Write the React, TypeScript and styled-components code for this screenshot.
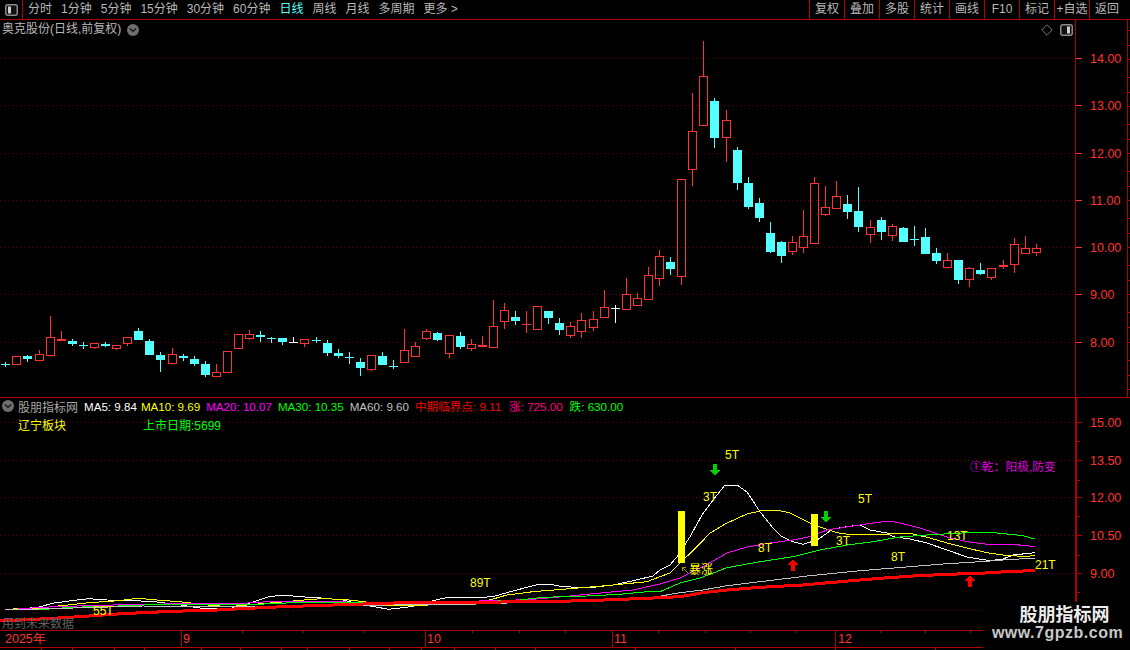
import React from "react";
import styled, { createGlobalStyle } from "styled-components";

const LINE = "#b00000";
const GRID = "#640000";
const AXIS = "#ff3232";
const CYAN = "#54ffff";
const CJK = `"Liberation Sans", "Noto Sans CJK SC", sans-serif`;

const Global = createGlobalStyle`
  html, body { margin: 0; padding: 0; background: #000; }
  body { font-family: ${CJK}; }
`;

const Screen = styled.div`
  position: relative;
  width: 1130px;
  height: 650px;
  overflow: hidden;
  background: #000;
  display: flex;
  flex-direction: column;
  font-size: 12px;
  color: #b8b8b8;
`;

const Toolbar = styled.div`
  height: 19px;
  flex: none;
  display: flex;
  align-items: stretch;
  border-bottom: 1px solid ${LINE};
`;

const IconBox = styled.div`
  width: 22px;
  border-right: 1px solid ${LINE};
  display: flex;
  align-items: center;
  justify-content: center;
`;

const Tabs = styled.div`
  display: flex;
  align-items: center;
  gap: 9px;
  margin-left: 5px;
`;

const Tab = styled.span<{ $active?: boolean }>`
  color: ${(p) => (p.$active ? CYAN : "#b8b8b8")};
  white-space: nowrap;
  line-height: 19px;
`;

const Buttons = styled.div`
  margin-left: auto;
  margin-right: 6px;
  display: flex;
`;

const ToolButton = styled.div`
  width: 34px;
  border-left: 1px solid ${LINE};
  text-align: center;
  line-height: 19px;
  white-space: nowrap;
  color: #b8b8b8;
`;

const Pane = styled.div<{ $h: number; $top?: boolean }>`
  position: relative;
  flex: none;
  height: ${(p) => p.$h}px;
  display: flex;
  ${(p) => (p.$top ? `border-top: 1px solid ${LINE};` : "")}
`;

const Plot = styled.svg`
  display: block;
  flex: none;
  width: 1075px;
  height: 100%;
`;

const AxisSvg = styled.svg`
  display: block;
  flex: none;
  width: 55px;
  height: 100%;
`;

const Title = styled.div`
  position: absolute;
  left: 2px;
  top: 1px;
  display: flex;
  align-items: center;
  gap: 6px;
  line-height: 17px;
  color: #b8b8b8;
`;

const ChartTools = styled.div`
  position: absolute;
  right: 57px;
  top: 4px;
  display: flex;
  align-items: center;
  gap: 7px;
`;

const LegendRow = styled.div`
  position: absolute;
  left: 2px;
  top: 0;
  display: flex;
  align-items: center;
  gap: 6px;
  height: 16px;
  white-space: nowrap;
`;

const LegendName = styled.span`
  margin-left: -2px;
  color: #a8a8a8;
`;

const LegendItem = styled.span<{ $color: string; $after: number }>`
  color: ${(p) => p.$color};
  font-size: 11.6px;
  margin-right: ${(p) => p.$after}px;
`;

const InfoRow = styled.div`
  position: absolute;
  left: 18px;
  top: 20px;
  display: flex;
  line-height: 16px;
`;

const Info = styled.span<{ $color: string; $w?: number }>`
  color: ${(p) => p.$color};
  ${(p) => (p.$w ? `width: ${p.$w}px;` : "")}
`;

const SignNote = styled.div`
  position: absolute;
  left: 970px;
  top: 61px;
  color: #e000e0;
  line-height: 16px;
  white-space: nowrap;
  font-size: 11.8px;
`;

const FutureNote = styled.div`
  position: absolute;
  left: 2px;
  top: 218px;
  color: #606060;
  line-height: 16px;
`;

const TimeAxis = styled.svg`
  display: block;
  flex: none;
  width: 1130px;
  height: 16px;
  border-top: 1px solid ${LINE};
`;

const StatusRow = styled.div`
  flex: 1;
  display: flex;
  border-top: 1px solid ${LINE};
`;

const StatusCell = styled.div<{ $w: number }>`
  flex: none;
  width: ${(p) => p.$w}px;
  border-right: 1px solid ${LINE};
  box-sizing: border-box;
`;

const Watermark = styled.div`
  position: absolute;
  right: 0;
  bottom: 0;
  width: 147px;
  height: 48px;
  background: #000;
  display: flex;
  flex-direction: column;
  align-items: center;
  box-sizing: border-box;
`;

const MarkName = styled.div`
  font-family: "Noto Sans CJK SC", sans-serif;
  font-weight: 700;
  font-size: 18px;
  line-height: 22px;
  color: #ececec;
  margin-left: 16px;
`;

const MarkUrl = styled.div`
  font-family: "Liberation Sans", sans-serif;
  font-weight: 700;
  font-size: 16px;
  letter-spacing: 0.5px;
  line-height: 18px;
  color: #c8c8c8;
  margin-left: 2px;
`;

const ChartText = styled.text<{ $fill?: string }>`
  font-family: ${CJK};
  font-size: 12px;
  fill: ${(p) => p.$fill || "#ffff00"};
`;

const AxisText = styled.text`
  font-family: "Liberation Sans", sans-serif;
  font-size: 12.5px;
  fill: ${AXIS};
`;

type C = [string, number, number, number?, number?];

const groups: { y0: number; list: C[] }[] = [
  {
    y0: 300,
    list: [
      ["C", 191, 193, 186, 201], ["r", 168, 191], ["c", 167, 177, 165, 186], ["r", 163, 179, 150, 183],
      ["r", 112, 164, 48], ["R", 118, 122, 93, 124], ["c", 123, 132, 117, 138], ["C", 135, 137, 126, 147],
      ["r", 130, 140, 130, 147], ["c", 132, 138, 126, 141], ["r", 136, 143, 136, 150], ["r", 112, 128, 112, 137],
      ["c", 93, 120, 84], ["c", 123, 165, 117], ["c", 165, 180, 156, 216], ["r", 163, 188, 144],
      ["c", 168, 174, 162, 183], ["c", 177, 192, 168, 198], ["c", 192, 225, 183, 231], ["r", 217, 227, 192, 231],
      ["r", 154, 215, 154, 219], ["r", 103, 143, 103, 147], ["r", 103, 113, 90, 120], ["c", 105, 111, 93, 126],
      ["C", 114, 116, 111, 129], ["c", 114, 126, 114, 135], ["w", 126, 128, 111, 129], ["r", 118, 128, 118, 141],
      ["C", 119, 121, 111, 129], ["c", 129, 159, 120, 168],
    ],
  },
  {
    y0: 280,
    list: [
      ["c", 219, 228, 207, 234], ["C", 232, 235, 216, 252], ["c", 246, 264, 234, 288], ["r", 226, 266, 226, 273],
      ["c", 228, 255, 216], ["C", 258, 260, 240, 267], ["r", 211, 245, 147], ["r", 199, 227, 186],
      ["r", 154, 173, 148, 180], ["c", 159, 180, 156, 183], ["r", 166, 218, 166, 234], ["c", 168, 201, 156, 207],
      ["r", 193, 203, 177, 213], ["R", 195, 201, 168], ["r", 139, 200, 60], ["r", 91, 122, 69, 147],
      ["c", 111, 123, 93, 135], ["X", 131, 133, 93, 159], ["r", 79, 146], ["c", 93, 114, 93, 132],
      ["c", 129, 150, 114, 165], ["r", 139, 164, 126, 174], ["r", 121, 152, 99, 174], ["r", 118, 140, 93, 153],
      ["r", 82, 110, 30], ["w", 84, 86, 75, 129],
    ],
  },
  {
    y0: 0,
    list: [["r", 882, 927, 834], ["r", 894, 915, 879], ["r", 825, 897, 801]],
  },
  {
    y0: 30,
    list: [
      ["r", 678, 743, 660, 768], ["c", 696, 717, 681, 735], ["r", 448, 737, 448, 765], ["r", 304, 418, 189, 468],
      ["r", 139, 284, 33], ["c", 213, 324, 204, 354], ["r", 271, 320, 240, 396], ["c", 360, 459, 351, 480],
      ["c", 459, 531, 441, 537], ["c", 519, 564, 504, 576], ["c", 609, 666, 576, 669], ["c", 636, 678, 633, 699],
      ["r", 637, 662, 618, 675], ["r", 619, 650, 540, 669], ["r", 460, 638, 441], ["r", 532, 551, 468, 558],
      ["r", 499, 533, 453], ["c", 522, 546, 495, 567], ["c", 543, 591, 471, 606],
      ["r", 592, 611, 570, 639],
    ],
  },
  {
    y0: 170,
    list: [
      ["c", 150, 186, 141, 209], ["r", 168, 195, 162, 213], ["c", 174, 216, 171], ["C", 207, 209, 168, 228],
      ["c", 201, 252, 174], ["c", 249, 273, 234, 282], ["r", 270, 291, 249], ["c", 270, 330, 270, 342],
      ["r", 294, 327, 291, 351], ["c", 300, 312, 279, 315], ["r", 294, 321, 294, 330], ["R", 285, 291, 270, 297],
      ["r", 222, 282, 204, 309], ["r", 235, 248, 198], ["r", 235, 245, 222, 258],
    ],
  },
];

const candles = groups.flatMap((g) =>
  g.list.map(([t, top, bot, hi, lo]) => ({
    t,
    top: Math.round(g.y0 + top / 3),
    bot: Math.round(g.y0 + bot / 3),
    hi: Math.round(g.y0 + (hi ?? top) / 3),
    lo: Math.round(g.y0 + (lo ?? bot) / 3),
  }))
);

function Candle({ i, t, top, bot, hi, lo }: { i: number; t: string; top: number; bot: number; hi: number; lo: number }) {
  const cx = Math.round(5.3 + 11.08 * i);
  const color = t === "c" || t === "C" ? CYAN : t === "w" ? "#ffffff" : "#ff3232";
  const wickX = cx + 0.5;
  if (t === "r") {
    return (
      <g shapeRendering="crispEdges">
        {hi < top && <line x1={wickX} x2={wickX} y1={hi} y2={top} stroke={color} />}
        {lo > bot && <line x1={wickX} x2={wickX} y1={bot} y2={lo} stroke={color} />}
        <rect x={cx - 3.5} y={top + 0.5} width={8} height={bot - top} fill="none" stroke={color} />
      </g>
    );
  }
  const thin = t !== "c";
  return (
    <g shapeRendering="crispEdges">
      <line x1={wickX} x2={wickX} y1={hi} y2={lo} stroke={color} />
      <rect x={cx - 4} y={top} width={9} height={t === "R" ? bot - top : thin ? 1 : bot - top} fill={color} />
    </g>
  );
}

const series: { color: string; width: number; pts: number[] }[] = [
  {
    color: "#ffffff", width: 1,
    pts: [5,610,21,609,39,607,54,603,77,600,89,598.7,107,600,136,600.7,157,602,179,604.7,193,607,207,609,232,608,250,603,268,597,282,595,300,596.7,321,598,343,600,364,605,389,609.3,411,606.7,429,601.7,446,597.7,475,597.7,493,596.7,514,590.7,536,585,548,584,563,586.7,590,587.7,613,585,633,580.7,653,576,660,570,670,565,677,556.7,690,536.7,702,515,717,495,725,485,737,485,747,492,760,511.7,773,528,782,536.7,793,541.7,803,544.3,817,540,833,529,847,526.7,860,525,870,530,887,533,893,536.7,910,539,927,543,947,550,967,557,990,560.7,1003,559,1013,555,1035,552.7],
  },
  {
    color: "#ffff00", width: 1,
    pts: [5,609.3,39,608,68,605,89,602.7,118,600.7,137.5,598.3,157,600,186,602.3,204,604.7,229,606.7,250,604.7,279,602.3,304,600,321,598.7,343,599.3,364,601.7,389,606,429,605,454,603.3,486,601,507,595,533,591.7,587,587.3,613,585,647,581.7,660,576.7,670,573,680,563,697,546.7,710,533,727,523,747,514,760,511,777,510,790,513,807,521.7,820,527,837,532.7,853,535,900,533.7,913,534,930,538,947,543,967,548,987,552.7,1003,555,1027,556.7,1035,555],
  },
  {
    color: "#ff00ff", width: 1,
    pts: [5,610,36,607.7,55,606.7,100,605.3,143,604.3,186,603.7,243,603.3,268,601.7,339,601.7,386,603.7,432,601.7,500,600.7,533,599.3,563,596.7,590,594,633,590,660,584,680,578,703,566.7,727,553,747,547,770,543,793,540,810,536.7,827,530,853,526,873,523,890,521,900,523,920,528,947,537,967,541.7,987,544.3,1013,544.3,1035,546.7],
  },
  {
    color: "#00ff00", width: 1,
    pts: [36,610,71,607.3,118,606,171,604,243,605,286,603,387,602.7,433,604,520,600,543,597.3,587,596,620,594.3,647,591.7,660,591.7,680,583,700,578,727,567.7,760,561.7,793,556.7,820,550,847,545,873,541.7,900,537,927,535,967,532.7,987,532,1007,534,1023,535.7,1035,539],
  },
  {
    color: "#c0c0c0", width: 1,
    pts: [5,610,143,606,186,606.7,327,606,387,605,467,604.3,577,600.7,613,599.3,653,597.3,680,592.7,703,590,727,585.7,760,581.7,810,575.7,860,570.7,910,566.7,943,564,980,561.7,1013,559.3,1035,558.3],
  },
  {
    color: "#ff0000", width: 3,
    pts: [0,621,40,619,70,617.3,93,615.7,117,614,150,612.3,183,611,217,610,240,608.7,283,606.7,333,605,403,602.7,467,602.3,537,601.7,587,600.7,647,598.3,667,597.3,680,596.7,703,592.7,727,590,760,587.3,803,585,840,581.7,880,578.3,913,576,947,574.3,980,573.3,1013,571.3,1035,570.7],
  },
];

const labels: [string, number, number][] = [
  ["5T", 725, 459], ["3T", 703, 501], ["5T", 858, 503], ["8T", 758, 552], ["3T", 836, 545],
  ["8T", 891, 561], ["13T", 947, 540], ["21T", 1035, 569], ["55T", 93, 615], ["89T", 470, 587], ["暴涨", 689, 574],
];

const mainGrid = [58, 105, 153, 200, 247, 294, 342];
const mainPrices = ["14.00", "13.00", "12.00", "11.00", "10.00", "9.00", "8.00"];
const subGrid = [422, 460, 497, 535, 573];
const subPrices = ["15.00", "13.50", "12.00", "10.50", "9.00"];
const subExtra = [610];
const subMinor = [441, 480, 516, 555, 592];

const DownArrow = ({ x, y }: { x: number; y: number }) => (
  <polygon
    fill="#00d000"
    shapeRendering="crispEdges"
    points={`${x - 2},${y} ${x + 2},${y} ${x + 2},${y + 6} ${x + 5},${y + 6} ${x},${y + 12} ${x - 5},${y + 6} ${x - 2},${y + 6}`}
  />
);

const UpArrow = ({ x, y }: { x: number; y: number }) => (
  <polygon
    fill="#ff0000"
    shapeRendering="crispEdges"
    points={`${x - 2},${y} ${x + 2},${y} ${x + 2},${y - 6} ${x + 5},${y - 6} ${x},${y - 12} ${x - 5},${y - 6} ${x - 2},${y - 6}`}
  />
);

const PanelIcon = ({ mirror }: { mirror?: boolean }) => (
  <svg width="13" height="12" viewBox="0 0 13 12">
    <rect x="0.75" y="0.75" width="11.5" height="10.5" rx="2" fill="#111" stroke="#8a8a8a" strokeWidth="1.5" />
    <rect x={mirror ? 3 : 7} y="2.5" width="3" height="7" fill="#d0d0d0" />
  </svg>
);

const Chevron = () => (
  <svg width="12" height="12" viewBox="0 0 12 12">
    <circle cx="6" cy="6" r="6" fill="#6e6e6e" />
    <path d="M3 4.6 L6 7.4 L9 4.6" fill="none" stroke="#111" strokeWidth="1.4" />
  </svg>
);

const Diamond = () => (
  <svg width="12" height="12" viewBox="0 0 12 12">
    <path d="M6 .8 L11.2 6 L6 11.2 L.8 6 Z" fill="none" stroke="#7a7a7a" />
  </svg>
);

const tabs = ["分时", "1分钟", "5分钟", "15分钟", "30分钟", "60分钟", "日线", "周线", "月线", "多周期", "更多 >"];
const tools = ["复权", "叠加", "多股", "统计", "画线", "F10", "标记", "+自选", "返回"];
const legends: [string, string, number][] = [
  ["MA5: 9.84", "#ffffff", -2],
  ["MA10: 9.69", "#ffff00", 0],
  ["MA20: 10.07", "#ff00ff", 0],
  ["MA30: 10.35", "#00ff00", 0],
  ["MA60: 9.60", "#c0c0c0", 0],
  ["中期临界点: 9.11", "#ff0000", 2],
  ["涨: 725.00", "#ff0080", 1],
  ["跌: 630.00", "#00ff00", 0],
];
const statusWidths = [42, 31, 42, 30, 57, 39, 41, 26, 42, 40, 32, 33, 41, 40, 100, 100, 100, 100];

export default function App() {
  return (
    <Screen>
      <Global />
      <Toolbar>
        <IconBox>
          <PanelIcon mirror />
        </IconBox>
        <Tabs>
          {tabs.map((t) => (
            <Tab key={t} $active={t === "日线"}>{t}</Tab>
          ))}
        </Tabs>
        <Buttons>
          {tools.map((t) => (
            <ToolButton key={t}>{t}</ToolButton>
          ))}
        </Buttons>
      </Toolbar>

      <Pane $h={377}>
        <Plot viewBox="0 20 1075 377">
          {mainGrid.map((y) => (
            <line key={y} x1={0} x2={1075} y1={y + 0.5} y2={y + 0.5} stroke={GRID} strokeDasharray="1 3" shapeRendering="crispEdges" />
          ))}
          {candles.map((c, i) => (
            <Candle key={i} i={i} {...c} />
          ))}
        </Plot>
        <AxisSvg viewBox="1075 20 55 377">
          <line x1={1075.5} x2={1075.5} y1={20} y2={397} stroke={LINE} shapeRendering="crispEdges" />
          <line x1={1127.5} x2={1127.5} y1={20} y2={397} stroke={LINE} shapeRendering="crispEdges" />
          {mainGrid.map((y, i) => (
            <g key={y}>
              <line x1={1076} x2={1082} y1={y + 0.5} y2={y + 0.5} stroke={AXIS} shapeRendering="crispEdges" />
              <AxisText x={1090} y={y + 5}>{mainPrices[i]}</AxisText>
            </g>
          ))}
          {[30, 45, 59, 77, 92, 106, 124, 139, 153, 171, 186, 200, 218, 233, 247, 265, 280, 294, 312, 327, 342, 360, 375, 389].map((y) => (
            <line key={y} x1={1128} x2={1130} y1={y + 0.5} y2={y + 0.5} stroke={LINE} shapeRendering="crispEdges" />
          ))}
        </AxisSvg>
        <Title>
          奥克股份(日线,前复权)
          <Chevron />
        </Title>
        <ChartTools>
          <Diamond />
          <PanelIcon />
        </ChartTools>
      </Pane>

      <Pane $h={232} $top>
        <Plot viewBox="0 398 1075 232">
          {[...subGrid, ...subExtra].map((y) => (
            <line key={y} x1={0} x2={1075} y1={y + 0.5} y2={y + 0.5} stroke={GRID} strokeDasharray="1 3" shapeRendering="crispEdges" />
          ))}
          {series.map((s) => (
            <polyline
              key={s.color}
              points={s.pts.join(" ")}
              fill="none"
              stroke={s.color}
              strokeWidth={s.width}
              shapeRendering="crispEdges"
            />
          ))}
          <rect x={678} y={511} width={7} height={52} fill="#ffff00" />
          <rect x={811} y={514} width={7} height={32} fill="#ffff00" />
          <path d="M688 573 L682.5 567.5 M682.5 567.5 h3.5 M682.5 567.5 v3.5" stroke="#a89000" fill="none" />
          <DownArrow x={715} y={464} />
          <DownArrow x={826} y={511} />
          <UpArrow x={793} y={571} />
          <UpArrow x={970} y={587} />
          {labels.map(([t, x, y]) => (
            <ChartText key={t + x} x={x} y={y}>{t}</ChartText>
          ))}
        </Plot>
        <AxisSvg viewBox="1075 398 55 232">
          <rect x={1075} y={398} width={2} height={232} fill={LINE} shapeRendering="crispEdges" />
          {subGrid.map((y, i) => (
            <g key={y}>
              <line x1={1077} x2={1082} y1={y + 0.5} y2={y + 0.5} stroke={LINE} shapeRendering="crispEdges" />
              <AxisText x={1090} y={y + 5}>{subPrices[i]}</AxisText>
            </g>
          ))}
          {subMinor.map((y) => (
            <line key={y} x1={1077} x2={1080} y1={y + 0.5} y2={y + 0.5} stroke={LINE} shapeRendering="crispEdges" />
          ))}
        </AxisSvg>
        <LegendRow>
          <Chevron />
          <LegendName>股朋指标网</LegendName>
          {legends.map(([t, c, after]) => (
            <LegendItem key={t} $color={c} $after={after}>{t}</LegendItem>
          ))}
        </LegendRow>
        <InfoRow>
          <Info $color="#ffff00" $w={125}>辽宁板块</Info>
          <Info $color="#00ff00">上市日期:5699</Info>
        </InfoRow>
        <SignNote>①乾：阳极,防变</SignNote>
        <FutureNote>用到未来数据</FutureNote>
      </Pane>

      <TimeAxis viewBox="0 631 1130 16">
        {[181, 425, 612, 835].map((x) => (
          <line key={x} x1={x + 0.5} x2={x + 0.5} y1={631} y2={647} stroke={LINE} shapeRendering="crispEdges" />
        ))}
        {[242, 303, 364, 472, 519, 565, 658, 705, 750, 795, 880, 925, 970].map((x) => (
          <line key={x} x1={x + 0.5} x2={x + 0.5} y1={631} y2={633} stroke={LINE} shapeRendering="crispEdges" />
        ))}
        <AxisText x={5} y={643}>2025年</AxisText>
        <AxisText x={183} y={643}>9</AxisText>
        <AxisText x={427} y={643}>10</AxisText>
        <AxisText x={614} y={643}>11</AxisText>
        <AxisText x={838} y={643}>12</AxisText>
      </TimeAxis>

      <StatusRow>
        {statusWidths.map((w, i) => (
          <StatusCell key={i} $w={w} />
        ))}
      </StatusRow>

      <Watermark>
        <MarkName>股朋指标网</MarkName>
        <MarkUrl>www.7gpzb.com</MarkUrl>
      </Watermark>
    </Screen>
  );
}
